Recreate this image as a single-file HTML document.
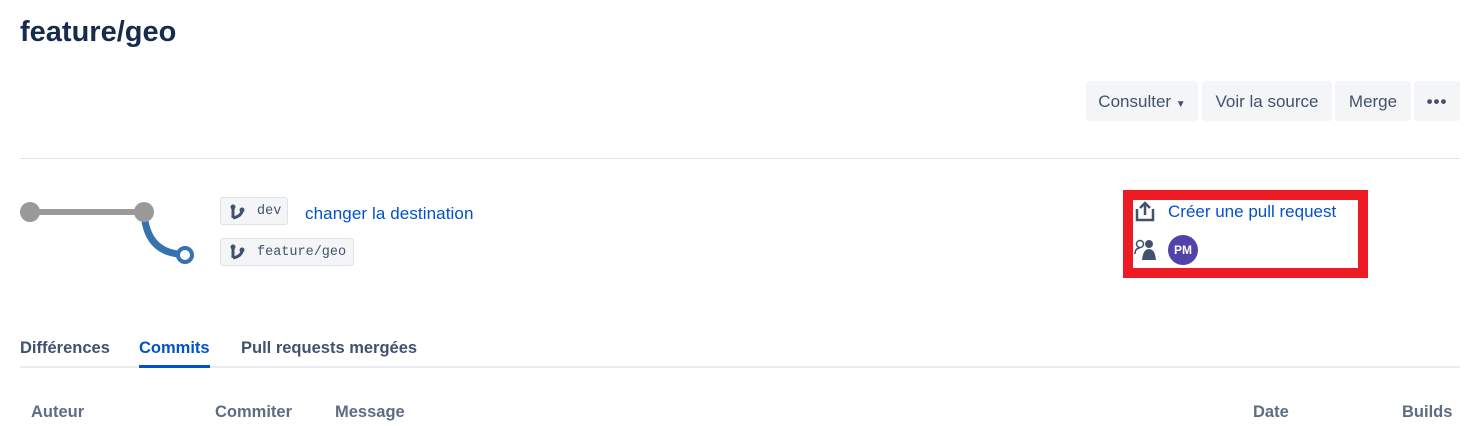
<!DOCTYPE html>
<html><head><meta charset="utf-8"><style>
body{margin:0;width:1472px;height:426px;overflow:hidden;background:#fff;font-family:"Liberation Sans",sans-serif;position:relative;color:#172b4d}
.a{position:absolute;white-space:nowrap}
.btn{position:absolute;top:81px;height:40px;background:#f4f5f7;border-radius:3px;color:#42526e;font-size:17px;line-height:42px;text-align:center}
.tag{position:absolute;height:28px;background:#f4f5f7;border:1px solid #dfe1e6;border-radius:3px;font-family:"Liberation Mono",monospace;font-size:13.5px;color:#42526e;line-height:28px;box-sizing:border-box}
.th{position:absolute;top:403px;font-size:16.5px;font-weight:bold;color:#5e6c84}
</style></head><body>
<div class="a" style="left:20px;top:16px;font-size:29px;font-weight:bold;color:#172b4d">feature/geo</div>
<div class="btn" style="left:1086px;width:112px">Consulter <span style="font-size:10px">▼</span></div>
<div class="btn" style="left:1202px;width:130px">Voir la source</div>
<div class="btn" style="left:1335px;width:76px">Merge</div>
<div class="btn" style="left:1414px;width:46px;font-weight:bold;letter-spacing:1px">•••</div>
<div class="a" style="left:20px;top:158px;width:1440px;height:1px;background:#dfe1e6"></div>
<svg class="a" style="left:0;top:180px" width="220" height="100">
<path d="M144 32 Q146 70 178 74" stroke="#3572b0" stroke-width="7" fill="none"/>
<line x1="30" y1="32" x2="144" y2="32" stroke="#999" stroke-width="6"/>
<circle cx="30" cy="32" r="10" fill="#999"/><circle cx="144" cy="32" r="10" fill="#999"/>
<circle cx="185" cy="75" r="7" fill="#fff" stroke="#3572b0" stroke-width="4"/>
</svg>
<div class="tag" style="left:220px;top:197px;width:68px;padding-left:36px">dev</div>
<div class="tag" style="left:220px;top:238px;width:134px;padding-left:36px">feature/geo</div>
<svg class="a" style="left:229px;top:203px" width="18" height="18"><circle cx="4" cy="4" r="2.5" fill="#42526e"/><circle cx="13" cy="7" r="2.5" fill="#42526e"/><path d="M4 4V15M4 15Q13 13 13 7" stroke="#42526e" stroke-width="3" fill="none"/></svg>
<svg class="a" style="left:229px;top:243px" width="18" height="18"><circle cx="4" cy="4" r="2.5" fill="#42526e"/><circle cx="13" cy="7" r="2.5" fill="#42526e"/><path d="M4 4V15M4 15Q13 13 13 7" stroke="#42526e" stroke-width="3" fill="none"/></svg>
<div class="a" style="left:305px;top:204px;font-size:17px;color:#0052cc;letter-spacing:0.1px">changer la destination</div>
<div class="a" style="left:1123px;top:190px;width:225px;height:68px;border:10px solid #ed1c24"></div>
<svg class="a" style="left:1134px;top:200px" width="22" height="22"><path d="M3 9V20H19V9" stroke="#42526e" stroke-width="2.5" fill="none"/><path d="M11 15V3M6 8L11 3L16 8" stroke="#42526e" stroke-width="2.5" fill="none"/></svg>
<div class="a" style="left:1168px;top:202px;font-size:17px;color:#0052cc">Créer une pull request</div>
<svg class="a" style="left:1134px;top:238px" width="24" height="24"><circle cx="6" cy="6" r="3.5" stroke="#42526e" stroke-width="1.5" fill="none"/><path d="M1 16Q1 10 6 10" stroke="#42526e" stroke-width="1.5" fill="none"/><circle cx="15" cy="6" r="4" fill="#42526e"/><path d="M8 22Q9 11 15 11Q21 11 22 22Z" fill="#42526e"/></svg>
<div class="a" style="left:1168px;top:235px;width:30px;height:30px;border-radius:50%;background:#5243aa;color:#fff;font-size:12px;font-weight:bold;line-height:30px;text-align:center">PM</div>
<div class="a" style="left:20px;top:366px;width:1440px;height:2px;background:#ebecf0"></div>
<div class="a" style="left:20px;top:339px;font-size:16.5px;font-weight:bold;color:#42526e">Différences</div>
<div class="a" style="left:139px;top:339px;font-size:16.5px;font-weight:bold;color:#0052cc">Commits</div>
<div class="a" style="left:139px;top:365px;width:71px;height:3px;background:#0052cc"></div>
<div class="a" style="left:241px;top:339px;font-size:16.5px;font-weight:bold;color:#42526e">Pull requests mergées</div>
<div class="th" style="left:31px">Auteur</div>
<div class="th" style="left:215px">Commiter</div>
<div class="th" style="left:335px">Message</div>
<div class="th" style="left:1253px">Date</div>
<div class="th" style="left:1402px">Builds</div>
</body></html>
